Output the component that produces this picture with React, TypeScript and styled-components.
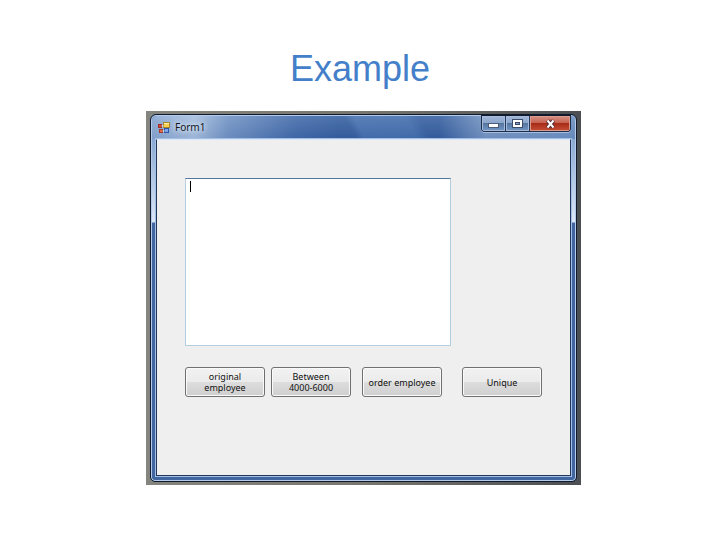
import React from "react";
import styled, { createGlobalStyle } from "styled-components";

const Global = createGlobalStyle`
  * { box-sizing: border-box; }
  body { margin: 0; background: #fff; }
`;

const Slide = styled.main`
  display: flex;
  flex-direction: column;
  padding: 49px 0 56px;
`;

const Heading = styled.h1`
  margin: 0 0 22px;
  text-align: center;
  font: 400 36px/40px "Liberation Sans", Arial, sans-serif;
  color: #447fc9;
`;

const Backdrop = styled.div`
  margin: 0 139px 0 146px;
  padding: 3px 4px;
  background: linear-gradient(90deg, #85857f 0, #77776f 50%, #4b4e52 100%);
`;

const Window = styled.section`
  display: flex;
  flex-direction: column;
  border: 1px solid #101a2c;
  border-radius: 6px 6px 5px 5px;
  box-shadow: inset 0 0 0 1px #b4cce9;
  padding: 1px 5px 5px;
  background: linear-gradient(180deg, #6f93c4 0, #8eacd6 28px, #dbe8f8 107px, #42669f 108px, #42669f 100%);
  font-family: "Noto Sans", "Open Sans", sans-serif;
  color: #14161c;
`;

const TitleBar = styled.header`
  display: flex;
  align-items: flex-start;
  height: 23px;
  margin: 0 -4px;
  padding-left: 6px;
  border-radius: 5px 5px 0 0;
  background:
    linear-gradient(180deg, rgba(255, 255, 255, 0.12), rgba(10, 40, 90, 0.06)),
    linear-gradient(62deg, transparent 47%, #456fae 49%, #426dac 61%, transparent 64%),
    linear-gradient(90deg, #86a5d0 0, #a5bddd 10%, #6f91c3 18%, #4169a9 34%, #355e9f 44%, #355e9f 68%, #7594c2 79%, #6b8fc2 100%);
`;

const AppIcon = styled.svg`
  width: 13px;
  height: 13px;
  margin-top: 5px;
`;

const Caption = styled.span`
  flex: 1;
  margin: 3px 0 0 4px;
  font-size: 10px;
  line-height: 16px;
  text-shadow: 0 0 5px #dce8f8, 0 0 5px #dce8f8;
`;

const Controls = styled.div`
  display: flex;
  height: 17px;
  margin: -1px 4px 0 0;
  border: 1px solid #1d2d48;
  border-top-color: #101a2c;
  border-radius: 0 0 4px 4px;
  overflow: hidden;
  box-shadow: 0 1px 0 #a4bce0;
`;

const ControlButton = styled.button<{ $kind: "min" | "max" | "close" }>`
  display: flex;
  align-items: center;
  justify-content: center;
  width: ${(p) => (p.$kind === "close" ? 41 : p.$kind === "max" ? 24 : 23)}px;
  padding: 0;
  border: 0;
  border-left: ${(p) => (p.$kind === "min" ? "0" : "1px solid #23385c")};
  box-shadow: inset 0 0 0 1px ${(p) => (p.$kind === "close" ? "#dc9a8c" : "#a5bbdb")};
  background: ${(p) =>
    p.$kind === "close"
      ? "linear-gradient(180deg, #d69286 0, #c66352 45%, #a82c18 50%, #c65038 100%)"
      : "linear-gradient(180deg, #a3b8d8 0, #8ba5cc 45%, #55779f 50%, #7697c6 100%)"};
`;

const Client = styled.form`
  display: flex;
  flex-direction: column;
  align-items: flex-start;
  min-height: 336px;
  padding: 38px 29px 78px 28px;
  border: 1px solid #20365a;
  border-top-color: #dbe8fb;
  box-shadow: 0 0 0 1px #a3bfe4;
  background: #efefef;
`;

const Editor = styled.div`
  position: relative;
  display: flex;
  width: 75%;
  max-width: 266px;
`;

const TextBox = styled.textarea`
  width: 100%;
  height: 168px;
  padding: 2px 4px;
  border: 1px solid #b3cfdf;
  border-top-color: #55779c;
  border-radius: 0;
  outline: 0;
  resize: none;
  background: #fff;
  font: 10px/14px "Noto Sans", sans-serif;
`;

const Caret = styled.span`
  position: absolute;
  left: 5px;
  top: 3px;
  width: 1px;
  height: 11px;
  background: #000;
  pointer-events: none;
`;

const Actions = styled.div`
  display: flex;
  margin-top: 21px;
`;

const ActionButton = styled.button<{ $gap: number }>`
  width: 80px;
  height: 30px;
  margin-left: ${(p) => p.$gap}px;
  padding: 0;
  border: 1px solid #707070;
  border-radius: 3px;
  box-shadow: inset 0 0 0 1px #fafafa;
  background: linear-gradient(180deg, #f2f2f2 0, #ebebeb 49%, #dddddd 50%, #cfcfcf 100%);
  font: 9px/11px "Noto Sans", "Open Sans", sans-serif;
  color: #101010;
  white-space: pre-line;
`;

const actions = [
  { label: "original\nemployee", gap: 0 },
  { label: "Between\n4000-6000", gap: 6 },
  { label: "order employee", gap: 11 },
  { label: "Unique", gap: 20 },
];

export default function App() {
  return (
    <Slide>
      <Global />
      <Heading>Example</Heading>
      <Backdrop>
        <Window aria-label="Form1">
          <TitleBar>
            <AppIcon viewBox="0 0 13 13" aria-hidden="true">
              <rect x="5.5" y="1.5" width="6" height="5" fill="#f6d04e" stroke="#a8842c" />
              <rect x="6" y="2" width="5" height="1" fill="#fff0a8" />
              <rect x="0.5" y="3.5" width="3" height="3" fill="#d64a35" stroke="#9c3028" />
              <rect x="1.5" y="8.5" width="3" height="3" fill="#e06a4c" stroke="#a53a2c" />
              <rect x="6.5" y="7.5" width="4" height="4" fill="#7fa5ea" stroke="#2f55a8" />
              <path d="M3.5 5H5.5M4.5 10H6.5" stroke="#f7f7f7" />
            </AppIcon>
            <Caption>Form1</Caption>
            <Controls>
              <ControlButton type="button" $kind="min" aria-label="Minimize">
                <svg width="11" height="11" viewBox="0 0 11 11">
                  <rect x="0.5" y="5.5" width="10" height="4" fill="#fff" stroke="#4b5b78" />
                </svg>
              </ControlButton>
              <ControlButton type="button" $kind="max" aria-label="Maximize">
                <svg width="11" height="9" viewBox="0 0 11 9">
                  <rect x="0.5" y="0.5" width="10" height="8" fill="#fff" stroke="#3d4c68" />
                  <rect x="3.5" y="3.5" width="4" height="2" fill="#7d98c4" stroke="#3d4c68" />
                </svg>
              </ControlButton>
              <ControlButton type="button" $kind="close" aria-label="Close">
                <svg width="11" height="10" viewBox="0 0 11 10">
                  <path d="M2.5 1.5L8.5 8.5M8.5 1.5L2.5 8.5" stroke="#4d2a30" strokeWidth="4" />
                  <path d="M2.5 1.5L8.5 8.5M8.5 1.5L2.5 8.5" stroke="#fff" strokeWidth="2" />
                </svg>
              </ControlButton>
            </Controls>
          </TitleBar>
          <Client>
            <Editor>
              <TextBox aria-label="Employees" spellCheck={false} />
              <Caret />
            </Editor>
            <Actions>
              {actions.map((a) => (
                <ActionButton key={a.label} type="button" $gap={a.gap}>
                  {a.label}
                </ActionButton>
              ))}
            </Actions>
          </Client>
        </Window>
      </Backdrop>
    </Slide>
  );
}
